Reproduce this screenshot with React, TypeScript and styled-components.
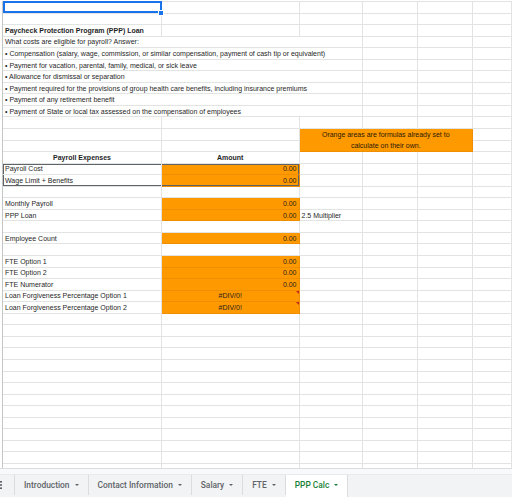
import React from "react";
import styled, { createGlobalStyle, css } from "styled-components";

const GlobalStyle = createGlobalStyle`
  html, body {
    margin: 0;
    padding: 0;
    background: #fff;
  }
  body {
    font-family: "Liberation Sans", Arial, sans-serif;
  }
`;

const ORANGE = "#ff9900";
const GRID_LINE = "#e2e3e3";
const OUTLINE = "#5f6368";

type Align = "left" | "center" | "right";

interface CellDef {
  text?: React.ReactNode;
  span?: number;
  rows?: number;
  align?: Align;
  bold?: boolean;
  fill?: boolean;
  edges?: string;
  error?: boolean;
  selected?: boolean;
  note?: boolean;
}

const Page = styled.div`
  width: 512px;
  height: 497px;
  display: flex;
  flex-direction: column;
  overflow: hidden;
  background: #fff;
`;

const SheetArea = styled.div`
  height: 468px;
  overflow: hidden;
  padding: 1px 0 0 2px;
  box-sizing: border-box;
`;

const Grid = styled.div`
  display: grid;
  grid-template-columns: 159px 137.5px 63.5px 55px 55px 1fr;
  grid-auto-rows: 11.55px;
  border-top: 1px solid ${GRID_LINE};
  border-left: 1px solid #c4c7c5;
`;

const edgeShadow = (edges?: string) => {
  if (!edges) return "none";
  const parts: string[] = [];
  if (edges.includes("t")) parts.push(`inset 0 1px 0 ${OUTLINE}`);
  if (edges.includes("b")) parts.push(`inset 0 -1px 0 ${OUTLINE}`);
  if (edges.includes("r")) parts.push(`inset -1px 0 0 ${OUTLINE}`);
  if (edges.includes("l")) parts.push(`inset 1px 0 0 ${OUTLINE}`);
  return parts.join(", ");
};

const Cell = styled.div<{
  $span?: number;
  $rows?: number;
  $align?: Align;
  $bold?: boolean;
  $fill?: boolean;
  $edges?: string;
  $error?: boolean;
  $selected?: boolean;
  $note?: boolean;
}>`
  position: relative;
  box-sizing: border-box;
  grid-column: span ${(p) => p.$span ?? 1};
  grid-row: span ${(p) => p.$rows ?? 1};
  display: flex;
  align-items: center;
  justify-content: ${(p) =>
    p.$align === "center" ? "center" : p.$align === "right" ? "flex-end" : "flex-start"};
  padding: 0 2px;
  border-right: 1px solid ${(p) => (p.$fill ? "rgba(190, 110, 0, 0.25)" : GRID_LINE)};
  border-bottom: 1px solid ${(p) => (p.$fill ? "rgba(190, 110, 0, 0.25)" : GRID_LINE)};
  background: ${(p) => (p.$fill ? ORANGE : "#fff")};
  box-shadow: ${(p) => edgeShadow(p.$edges)};
  font-size: 7px;
  font-weight: ${(p) => (p.$bold ? 700 : 400)};
  color: #1f1f1f;
  white-space: nowrap;

  ${(p) =>
    p.$note &&
    css`
      white-space: normal;
      text-align: center;
      line-height: 11.55px;
      color: #2a1a00;
    `}

  ${(p) =>
    p.$error &&
    css`
      &::after {
        content: "";
        position: absolute;
        top: 0;
        right: 0;
        width: 0;
        height: 0;
        border-left: 3px solid transparent;
        border-top: 3px solid #c5221f;
      }
    `}

  ${(p) =>
    p.$selected &&
    css`
      z-index: 2;
      &::before {
        content: "";
        position: absolute;
        top: -1px;
        left: 0;
        right: -1px;
        bottom: 0;
        border: 2px solid #1a73e8;
      }
      &::after {
        content: "";
        position: absolute;
        right: -3px;
        bottom: -3px;
        width: 4px;
        height: 4px;
        background: #1a73e8;
        border: 1px solid #fff;
      }
    `}
`;

const ScrollStrip = styled.div`
  height: 6px;
  box-sizing: border-box;
  background: #f8f9fa;
  border-top: 1px solid #dadce0;
`;

const TabBar = styled.div`
  flex: 1;
  display: flex;
  align-items: stretch;
  background: #f1f3f4;
  border-top: 1px solid #e8eaed;
  padding-bottom: 2px;
`;

const SheetsMenu = styled.div`
  width: 15px;
  box-sizing: border-box;
  border-right: 1px solid #dadce0;
  display: flex;
  align-items: center;
  color: #5f6368;
`;

const Tab = styled.div<{ $active?: boolean }>`
  display: flex;
  align-items: center;
  gap: 5px;
  padding: 0 9px 0 9px;
  border-right: 1px solid #dadce0;
  font-family: Roboto, "Liberation Sans", sans-serif;
  font-size: 8.4px;
  font-weight: 500;
  color: ${(p) => (p.$active ? "#188038" : "#5f6368")};
  background: ${(p) => (p.$active ? "#fff" : "transparent")};
  margin-bottom: ${(p) => (p.$active ? "-2px" : "0")};
  padding-bottom: ${(p) => (p.$active ? "2px" : "0")};
`;

const Caret = styled.span`
  width: 0;
  height: 0;
  border-left: 2px solid transparent;
  border-right: 2px solid transparent;
  border-top: 2px solid currentColor;
`;

const blank = (): CellDef[] => [{}, {}, {}, {}, {}, {}];

const label = (text: string, amount: CellDef, extra: CellDef[] = [{}, {}, {}, {}]): CellDef[] => [
  { text },
  { fill: true, ...amount },
  ...extra,
];

const money: CellDef = { text: "0.00", align: "right" };
const divZero: CellDef = { text: "#DIV/0!", align: "center", error: true };

const bullet = (text: string): CellDef[] => [{ text, span: 3 }, {}, {}, {}];

const rows: CellDef[][] = [
  [{ selected: true }, {}, {}, {}, {}, {}],
  blank(),
  [{ text: "Paycheck Protection Program (PPP) Loan", bold: true }, {}, {}, {}, {}, {}],
  bullet("What costs are eligible for payroll? Answer:"),
  bullet(
    "• Compensation (salary, wage, commission, or similar compensation, payment of cash tip or equivalent)"
  ),
  bullet("• Payment for vacation, parental, family, medical, or sick leave"),
  bullet("• Allowance for dismissal or separation"),
  bullet(
    "• Payment required for the provisions of group health care benefits, including insurance premiums"
  ),
  bullet("• Payment of any retirement benefit"),
  bullet("• Payment of State or local tax assessed on the compensation of employees"),
  blank(),
  [
    {},
    {},
    {
      span: 3,
      rows: 2,
      fill: true,
      note: true,
      align: "center",
      text: (
        <span>
          Orange areas are formulas already set to
          <br />
          calculate on their own.
        </span>
      ),
    },
    {},
  ],
  [{}, {}, {}],
  [
    { text: "Payroll Expenses", bold: true, align: "center" },
    { text: "Amount", bold: true, align: "center" },
    {},
    {},
    {},
    {},
  ],
  [
    { text: "Payroll Cost", edges: "tl" },
    { ...money, fill: true, edges: "tr" },
    {},
    {},
    {},
    {},
  ],
  [
    { text: "Wage Limit + Benefits", edges: "bl" },
    { ...money, fill: true, edges: "br" },
    {},
    {},
    {},
    {},
  ],
  blank(),
  label("Monthly Payroll", money),
  label("PPP Loan", money, [{ text: "2.5 Multiplier" }, {}, {}, {}]),
  blank(),
  label("Employee Count", money),
  blank(),
  label("FTE Option 1", money),
  label("FTE Option 2", money),
  label("FTE Numerator", money),
  label("Loan Forgiveness Percentage Option 1", divZero),
  label("Loan Forgiveness Percentage Option 2", divZero),
  ...Array.from({ length: 14 }, blank),
];

const tabs = ["Introduction", "Contact Information", "Salary", "FTE", "PPP Calc"];

export default function App() {
  return (
    <Page>
      <GlobalStyle />
      <SheetArea>
        <Grid>
          {rows.map((row, r) =>
            row.map((c, i) => (
              <Cell
                key={`${r}-${i}`}
                $span={c.span}
                $rows={c.rows}
                $align={c.align}
                $bold={c.bold}
                $fill={c.fill}
                $edges={c.edges}
                $error={c.error}
                $selected={c.selected}
                $note={c.note}
              >
                {c.text}
              </Cell>
            ))
          )}
        </Grid>
      </SheetArea>
      <ScrollStrip />
      <TabBar>
        <SheetsMenu>
          <svg width="3" height="8" viewBox="0 0 3 8">
            <rect x="0" y="0" width="2" height="1.6" fill="currentColor" />
            <rect x="0" y="3.2" width="2" height="1.6" fill="currentColor" />
            <rect x="0" y="6.4" width="2" height="1.6" fill="currentColor" />
          </svg>
        </SheetsMenu>
        {tabs.map((t) => (
          <Tab key={t} $active={t === "PPP Calc"}>
            {t}
            <Caret />
          </Tab>
        ))}
      </TabBar>
    </Page>
  );
}
